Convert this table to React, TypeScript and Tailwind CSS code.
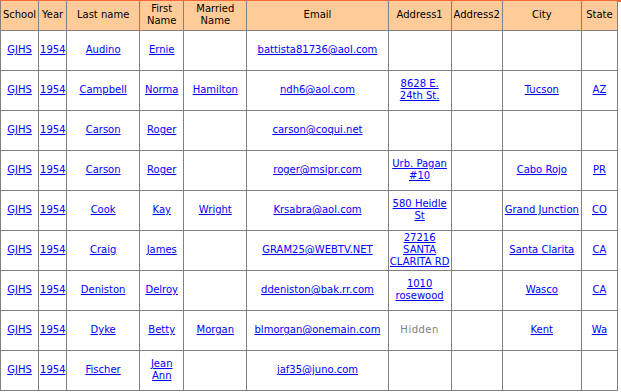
const cols = [38, 28, 73, 44, 63, 141, 63, 51, 79, 36];

const headers = ["School", "Year", "Last name", "First Name", "Married Name", "Email", "Address1", "Address2", "City", "State"];

type Row = {
  last: string;
  first: string;
  married?: string;
  email: string;
  addr1?: string;
  hidden?: boolean;
  city?: string;
  state?: string;
};

const rows: Row[] = [
  { last: "Audino", first: "Ernie", email: "battista81736@aol.com" },
  { last: "Campbell", first: "Norma", married: "Hamilton", email: "ndh6@aol.com", addr1: "8628 E. 24th St.", city: "Tucson", state: "AZ" },
  { last: "Carson", first: "Roger", email: "carson@coqui.net" },
  { last: "Carson", first: "Roger", email: "roger@msipr.com", addr1: "Urb. Pagan #10", city: "Cabo Rojo", state: "PR" },
  { last: "Cook", first: "Kay", married: "Wright", email: "Krsabra@aol.com", addr1: "580 Heidle St", city: "Grand Junction", state: "CO" },
  { last: "Craig", first: "James", email: "GRAM25@WEBTV.NET", addr1: "27216 SANTA CLARITA RD", city: "Santa Clarita", state: "CA" },
  { last: "Deniston", first: "Delroy", email: "ddeniston@bak.rr.com", addr1: "1010 rosewood", city: "Wasco", state: "CA" },
  { last: "Dyke", first: "Betty", married: "Morgan", email: "blmorgan@onemain.com", hidden: true, city: "Kent", state: "Wa" },
  { last: "Fischer", first: "Jean Ann", email: "jaf35@juno.com" },
];

const L = ({ children }: { children?: string }) =>
  children ? (
    <a href="#" className="text-[#0000ff] underline">
      {children}
    </a>
  ) : null;

const Td = ({ children }: { children?: React.ReactNode }) => (
  <td className="border border-[#808080] px-[1px] text-center align-middle">{children}</td>
);

export default function App() {
  return (
    <div className="w-[621px] h-[392px] overflow-hidden bg-white font-['DejaVu_Sans',sans-serif] text-[10px] leading-[12px]">
      <div className="h-[2px] w-full bg-[#f4673a]" />
      <table className="table-fixed border-collapse w-[618px] -mt-[1px]">
        <colgroup>
          {cols.map((w, i) => (
            <col key={i} style={{ width: w }} />
          ))}
        </colgroup>
        <thead>
          <tr className="h-[29px] bg-[#ffcc99]">
            {headers.map((h) => (
              <th key={h} className="border border-[#808080] border-t-0 px-[1px] font-normal text-black text-center align-middle">
                {h}
              </th>
            ))}
          </tr>
        </thead>
        <tbody>
          {rows.map((r, i) => (
            <tr key={i} className="h-[40px]">
              <Td><L>GJHS</L></Td>
              <Td><L>1954</L></Td>
              <Td><L>{r.last}</L></Td>
              <Td><L>{r.first}</L></Td>
              <Td><L>{r.married}</L></Td>
              <Td><L>{r.email}</L></Td>
              <Td>
                {r.hidden ? (
                  <span className="text-[#808080] tracking-[0.5px]">Hidden</span>
                ) : (
                  <L>{r.addr1}</L>
                )}
              </Td>
              <Td />
              <Td><L>{r.city}</L></Td>
              <Td><L>{r.state}</L></Td>
            </tr>
          ))}
        </tbody>
      </table>
    </div>
  );
}
